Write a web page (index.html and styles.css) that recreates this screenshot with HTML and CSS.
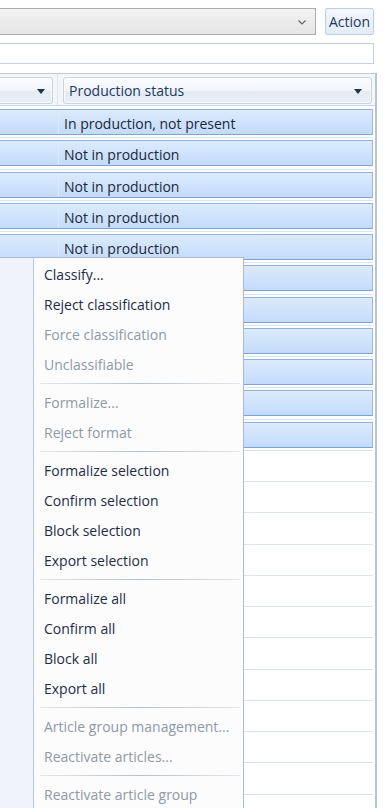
FILE: index.html
```html
<!DOCTYPE html>
<html>
<head>
<meta charset="utf-8">
<link rel="stylesheet" href="styles.css">
</head>
<body>
<div class="page">
  <div class="toolbar">
    <div class="combo">
      <svg class="chev" width="8" height="5" viewBox="0 0 8 5"><polyline points="0.5,0.5 4,4 7.5,0.5" fill="none" stroke="#606060" stroke-width="1.1"/></svg>
    </div>
    <div class="action">Action</div>
  </div>
  <div class="search"></div>
  <div class="grid">
    <div class="header">
      <div class="hcol hcol1"><div class="hcell"><span></span><i class="tri"></i></div></div>
      <div class="hcol hcol2"><div class="hcell"><span>Production status</span><i class="tri"></i></div></div>
    </div>
    <div class="rows">
      <div class="row sel"><div class="blk"><div class="c1"></div><div class="c2">In production, not present</div></div></div>
      <div class="row sel"><div class="blk"><div class="c1"></div><div class="c2">Not in production</div></div></div>
      <div class="row sel"><div class="blk"><div class="c1"></div><div class="c2">Not in production</div></div></div>
      <div class="row sel"><div class="blk"><div class="c1"></div><div class="c2">Not in production</div></div></div>
      <div class="row sel"><div class="blk"><div class="c1"></div><div class="c2">Not in production</div></div></div>
      <div class="row sel"><div class="blk"><div class="c1"></div><div class="c2"></div></div></div>
      <div class="row sel"><div class="blk"><div class="c1"></div><div class="c2"></div></div></div>
      <div class="row sel"><div class="blk"><div class="c1"></div><div class="c2"></div></div></div>
      <div class="row sel"><div class="blk"><div class="c1"></div><div class="c2"></div></div></div>
      <div class="row sel"><div class="blk"><div class="c1"></div><div class="c2"></div></div></div>
      <div class="row sel"><div class="blk"><div class="c1"></div><div class="c2"></div></div></div>
      <div class="row"></div>
      <div class="row"></div>
      <div class="row"></div>
      <div class="row"></div>
      <div class="row"></div>
      <div class="row"></div>
      <div class="row"></div>
      <div class="row"></div>
      <div class="row"></div>
      <div class="row"></div>
      <div class="row"></div>
      <div class="row"></div>
    </div>
  </div>

  <div class="menu">
    <div class="item">Classify...</div>
    <div class="item">Reject classification</div>
    <div class="item dis">Force classification</div>
    <div class="item dis">Unclassifiable</div>
    <div class="sep"></div>
    <div class="item dis">Formalize...</div>
    <div class="item dis">Reject format</div>
    <div class="sep"></div>
    <div class="item">Formalize selection</div>
    <div class="item">Confirm selection</div>
    <div class="item">Block selection</div>
    <div class="item">Export selection</div>
    <div class="sep"></div>
    <div class="item">Formalize all</div>
    <div class="item">Confirm all</div>
    <div class="item">Block all</div>
    <div class="item">Export all</div>
    <div class="sep"></div>
    <div class="item dis">Article group management...</div>
    <div class="item dis">Reactivate articles...</div>
    <div class="sep"></div>
    <div class="item dis">Reactivate article group</div>
  </div>
</div>
</body>
</html>
```
FILE: styles.css
```css
html, body {
  margin: 0;
  padding: 0;
  background: #ffffff;
}
body {
  font-family: "Open Sans", "Noto Sans", sans-serif;
  font-size: 14px;
  color: #1b2737;
}
.page {
  position: relative;
  width: 384px;
  height: 808px;
  overflow: hidden;
  padding-top: 8px;
  box-sizing: border-box;
}
.toolbar {
  display: flex;
  gap: 9px;
  height: 27px;
}
.combo {
  box-sizing: border-box;
  margin-left: -3px;
  width: 319px;
  height: 27px;
  border: 1px solid #acacac;
  background: linear-gradient(#f2f2f2, #e6e6e6);
  display: flex;
  align-items: center;
  justify-content: flex-end;
  padding-right: 9px;
}
.chev { display: block; margin-top: 1px; }
.action {
  box-sizing: border-box;
  width: 49px;
  height: 27px;
  border: 1px solid #bccfe6;
  border-radius: 2px;
  background: linear-gradient(#f4f8fd, #e2ebf7);
  color: #1e395b;
  font-size: 14px;
  display: flex;
  align-items: center;
  justify-content: center;
  padding-bottom: 1px;
}
.search {
  box-sizing: border-box;
  margin-top: 8px;
  margin-left: -3px;
  width: 377px;
  height: 21px;
  border: 1px solid #c5d1e0;
  background: #fff;
}
.grid {
  margin-top: 9px;
  margin-left: -3px;
  width: 380px;
  box-sizing: border-box;
  border-top: 1px solid #c4cad2;
  border-right: 2px solid #b9c4d2;
}
.header {
  display: flex;
  height: 32px;
  box-sizing: border-box;
  padding-top: 3px;
  background: #f4f6f9;
  border-bottom: 1px solid #c9d4e2;
}
.hcol {
  box-sizing: border-box;
  height: 27px;
}
.hcol1 {
  width: 61px;
  padding-right: 4px;
  border-right: 1px solid #dde5ef;
  height: 31px;
  margin-top: -3px;
  padding-top: 3px;
}
.hcol2 {
  flex: 1;
  padding-left: 5px;
  padding-right: 3px;
}
.hcell {
  box-sizing: border-box;
  height: 27px;
  border: 1px solid #c8d4e3;
  border-radius: 3px;
  background: linear-gradient(#fbfcfe 0%, #f1f5fa 50%, #e4ebf4 51%, #e8eef6 100%);
  box-shadow: inset 0 0 0 1px rgba(255,255,255,0.7);
  display: flex;
  align-items: center;
  justify-content: space-between;
  padding: 0 9px 0 5px;
  color: #1e3a5c;
  font-size: 14px;
}
.hcol1 .hcell { border-left: none; border-radius: 0 3px 3px 0; padding-right: 7px; }
.tri {
  width: 0;
  height: 0;
  border-left: 4.5px solid transparent;
  border-right: 4.5px solid transparent;
  border-top: 5px solid #1d3557;
  margin-top: 1px;
}
.rows {
  padding-right: 2px;
}
.row {
  box-sizing: border-box;
  height: 31.25px;
  border-top: 1px solid #dae5f3;
  padding-top: 2px;
}
.row:first-child { border-top-color: transparent; }
.blk {
  box-sizing: border-box;
  height: 26px;
  display: flex;
  border-top: 1px solid #8fb2de;
  border-bottom: 1px solid #7fa3d2;
  border-right: 1px solid #9ab8de;
  background: linear-gradient(#dcebfd, #c3dbfb);
}
.c1 {
  width: 61px;
  border-right: 1px solid #e0ebf9;
}
.c2 {
  flex: 1;
  padding-left: 5px;
  padding-top: 3px;
  display: flex;
  align-items: center;
  white-space: nowrap;
}
.menu {
  position: absolute;
  left: -4px;
  top: 257px;
  width: 248px;
  box-sizing: border-box;
  border: 1px solid #a9bbd3;
  padding: 2px 0;
  background: linear-gradient(to right, #eff3fb 0, #eff3fb 36px, #b9c9dd 36px, #b9c9dd 37px, #fcfcfc 37px);
}
.item {
  height: 30px;
  line-height: 30px;
  padding-left: 47px;
  color: #1f2c46;
  white-space: nowrap;
}
.item.dis { color: #8f99a8; }
.sep {
  height: 8px;
  position: relative;
}
.sep::after {
  content: "";
  position: absolute;
  left: 43px;
  right: 3px;
  top: 3px;
  height: 1px;
  background: linear-gradient(to right, #e4e8ee, #b8c0cc 50%, #e4e8ee);
}
```
